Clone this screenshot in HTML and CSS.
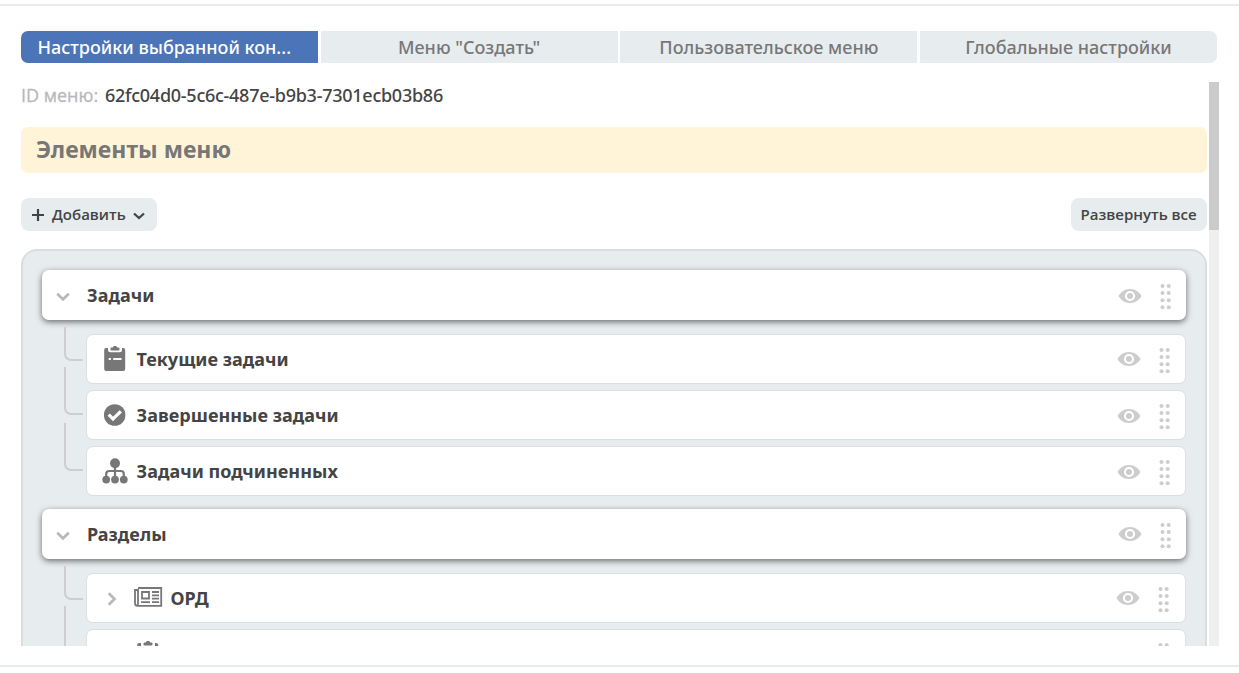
FILE: index.html
```html
<!DOCTYPE html>
<html lang="ru">
<head>
<meta charset="utf-8">
<title>Настройки меню</title>
<link rel="stylesheet" href="styles.css">
</head>
<body>
<svg class="sprite" aria-hidden="true">
  <symbol id="eye" viewBox="0 0 24 16"><path fill-rule="evenodd" d="M12 1C6.500 1 2.200 4.500.500 8c1.700 3.500 6 7 11.500 7s9.800-3.500 11.500-7C21.800 4.500 17.500 1 12 1zm0 1.900a5.100 5.100 0 1 1 0 10.200 5.100 5.100 0 0 1 0-10.200z"/><circle cx="12" cy="8" r="3"/></symbol>
  <symbol id="grip" viewBox="0 0 11 26"><circle cx="2.500" cy="2" r="2"/><circle cx="8.700" cy="2" r="2"/><circle cx="2.500" cy="9" r="2"/><circle cx="8.700" cy="9" r="2"/><circle cx="2.500" cy="16.300" r="2"/><circle cx="8.700" cy="16.300" r="2"/><circle cx="2.500" cy="23.300" r="2"/><circle cx="8.700" cy="23.300" r="2"/></symbol>
  <symbol id="down" viewBox="0 0 14 10"><path class="stroke" d="M1.200 1.800 7 7.300 12.800 1.800"/></symbol>
  <symbol id="clipboard" viewBox="0 0 22 26"><path fill-rule="evenodd" d="M2.300 2H4v1.800a2.500 2.500 0 0 0 2.500 2.500h9A2.500 2.500 0 0 0 18 3.800V2h1.200A2 2 0 0 1 21.200 4v19a2 2 0 0 1-2 2h-17a2 2 0 0 1-2-2V4a2 2 0 0 1 2.100-2zM4.700 12v2h2.200v-2zM9.200 12v2h8.300v-2z"/><path d="M7.500 1.400h1.300C9.200.400 10 0 11 0s1.800.4 2.200 1.400h1.300a1 1 0 0 1 1 1v1a1 1 0 0 1-1 1h-7a1 1 0 0 1-1-1v-1a1 1 0 0 1 1-1z"/></symbol>
  <symbol id="check" viewBox="0 0 22 22"><circle cx="11" cy="11" r="10.800"/><path class="tick" d="m5 10.700 4.300 4.300 7.800-7.700"/></symbol>
  <symbol id="tree" viewBox="0 0 26 26"><circle cx="13" cy="5.300" r="5"/><circle cx="4.200" cy="21.600" r="3.900"/><circle cx="13" cy="21.600" r="3.900"/><circle cx="21.800" cy="21.600" r="3.900"/><path class="branch" d="M13 8v12M4.200 19v-3a3 3 0 0 1 3-3h11.600a3 3 0 0 1 3 3v3"/></symbol>
  <symbol id="news" viewBox="0 0 29 20"><path class="outline" d="M4 1h23.200v17.800H3.200A2.300 2.300 0 0 1 1 16.500V3h3v13.500a2 2 0 0 1-1.200 2M8 5h7v6.500H8zM18 5h7M18 8.300h7M18 11.600h7M7 15.200h9M18 15.200h7"/></symbol>
</svg>

<main class="dialog">
  <nav class="tabs">
    <a class="tab tab-active">Настройки выбранной кон...</a>
    <a class="tab">Меню "Создать"</a>
    <a class="tab">Пользовательское меню</a>
    <a class="tab">Глобальные настройки</a>
  </nav>
  <div class="scroll">
    <div class="content">
      <div class="menu-id"><span class="label">ID меню:</span><span class="value">62fc04d0-5c6c-487e-b9b3-7301ecb03b86</span></div>
      <h2 class="banner">Элементы меню</h2>
      <div class="toolbar">
        <button class="button add"><svg class="plus" viewBox="0 0 12 12"><path class="stroke" d="M6 0v12M0 6h12"/></svg><span>Добавить</span><svg class="caret" viewBox="0 0 12 8"><path class="stroke" d="M1 1.500 6 6 11 1.500"/></svg></button>
        <button class="button expand"><span>Развернуть все</span></button>
      </div>
      <div class="panel">
        <section class="group">
          <div class="row head"><svg class="toggle"><use href="#down"/></svg><span class="title">Задачи</span><svg class="eye"><use href="#eye"/></svg><svg class="grip"><use href="#grip"/></svg></div>
          <div class="children">
            <div class="row item raised"><svg class="icon"><use href="#clipboard" width="22" height="26" x="2"/></svg><span class="title">Текущие задачи</span><svg class="eye"><use href="#eye"/></svg><svg class="grip"><use href="#grip"/></svg></div>
            <div class="row item"><svg class="icon"><use href="#check" width="22" height="22" x="1.700" y="2"/></svg><span class="title">Завершенные задачи</span><svg class="eye"><use href="#eye"/></svg><svg class="grip"><use href="#grip"/></svg></div>
            <div class="row item"><svg class="icon"><use href="#tree" width="26" height="26"/></svg><span class="title">Задачи подчиненных</span><svg class="eye"><use href="#eye"/></svg><svg class="grip"><use href="#grip"/></svg></div>
          </div>
        </section>
        <section class="group">
          <div class="row head raised"><svg class="toggle"><use href="#down"/></svg><span class="title">Разделы</span><svg class="eye"><use href="#eye"/></svg><svg class="grip"><use href="#grip"/></svg></div>
          <div class="children">
            <div class="row item folder raised"><svg class="chevron" viewBox="0 0 10 14"><path class="stroke" d="M1.700 1.200 7.500 7 1.700 12.800"/></svg><svg class="news"><use href="#news"/></svg><span class="title">ОРД</span><svg class="eye"><use href="#eye"/></svg><svg class="grip"><use href="#grip"/></svg></div>
            <div class="row item folder"><svg class="chevron" viewBox="0 0 10 14"><path class="stroke" d="M1.700 1.200 7.500 7 1.700 12.800"/></svg><svg class="icon"><use href="#clipboard" width="22" height="26" x="2"/></svg><span class="title"></span><svg class="eye"><use href="#eye"/></svg><svg class="grip"><use href="#grip"/></svg></div>
          </div>
        </section>
      </div>
    </div>
    <div class="scrollbar"><div class="thumb"></div></div>
  </div>
</main>
</body>
</html>
```
FILE: styles.css
```css
*, *::before { box-sizing: border-box; }
body {
  margin: 0;
  height: 673px;
  padding-top: 4px;
  overflow: hidden;
  background: #fff;
  color: #444;
  font: 500 18px/24px "Noto Sans", "Open Sans", sans-serif;
}
svg { display: block; flex: none; fill: currentColor; }
.sprite { position: absolute; width: 0; height: 0; }
.stroke { fill: none; stroke: currentColor; stroke-width: 2.700; }
.tick { fill: none; stroke: #fff; stroke-width: 3.200; }
.branch { fill: none; stroke: currentColor; stroke-width: 2.200; }
.outline { fill: none; stroke: currentColor; stroke-width: 1.800; }

.dialog {
  height: 663px;
  padding: 25px 20px 0 21px;
  border-top: 2px solid #e7ecef;
  border-bottom: 2px solid #e7ecef;
}
.tabs {
  display: grid;
  grid-template-columns: repeat(4, 297px);
  grid-template-rows: 32px;
  justify-content: space-between;
  width: 1196px;
}
.tab {
  background: #e7ecee;
  color: #777;
  line-height: 33px;
  text-align: center;
  white-space: nowrap;
}
.tab:first-child { border-radius: 7px 0 0 7px; }
.tab:last-child { border-radius: 0 7px 7px 0; }
.tab-active { background: #4b74b9; color: #fff; text-align: left; padding-left: 16.500px; }

.scroll { display: flex; gap: 2px; height: 564px; margin-top: 19px; overflow: hidden; }
.content { width: 1186px; }
.scrollbar { width: 10px; background: #efefef; }
.thumb { height: 148px; background: #cbcbcb; }

.menu-id { display: flex; height: 27px; line-height: 27px; }
.label { width: 84px; color: #b8b8b8; font-family: "Open Sans", sans-serif; -webkit-text-stroke: .3px currentColor; }
.value { letter-spacing: -.26px; }
.banner {
  height: 46px;
  margin: 18px 0 25px;
  padding-left: 15px;
  border-radius: 7px;
  background: #fff4d8;
  color: #777;
  font-size: 23px;
  font-weight: 700;
  line-height: 45px;
}
.toolbar { display: flex; justify-content: space-between; height: 33px; margin-bottom: 18px; }
.button {
  display: flex;
  align-items: center;
  width: 136px;
  padding: 0 9.500px;
  border: 0;
  border-radius: 8px;
  background: #e7ecee;
  color: #444;
  font: 600 15px/33px "Open Sans", "Noto Sans", sans-serif;
  white-space: nowrap;
}
.plus { width: 12px; height: 12px; margin: 0 8px 0 1.500px; }
.plus .stroke { stroke-width: 2.200; }
.caret { width: 12px; height: 8px; margin: 2px 0 0 7.500px; }
.caret .stroke { stroke-width: 2.300; }

.panel {
  height: 600px;
  padding: 19px 19px 0;
  border: 2px solid #d8dde0;
  border-radius: 16px;
  background: #e7ecee;
}
.group { margin-bottom: 13px; }
.row {
  display: flex;
  align-items: flex-start;
  height: 50px;
  border-radius: 7px;
  background: #fff;
  font-weight: 700;
}
.head { width: 1144px; box-shadow: 0 2px 6px rgba(0, 0, 0, .55); }
.toggle { width: 14px; height: 10px; margin: 22px 17px 0 14px; color: #b9b9b9; }
.title { flex: 1; line-height: 50px; white-space: nowrap; letter-spacing: .03px; }
.eye { width: 24px; height: 16px; margin: 18px 18px 0 0; color: #cdcdcd; }
.raised .eye { margin-top: 17px; }
.grip { width: 11px; height: 26px; margin: 14px 15px 0 0; color: #cdcdcd; }
.children { display: grid; gap: 6px; padding: 14px 0 0 44px; }
.item { position: relative; border: 1px solid #dadfe2; }
.item::before {
  content: "";
  position: absolute;
  left: -23px;
  top: -24px;
  width: 19px;
  height: 48px;
  border: 2px solid #cecece;
  border-width: 0 0 2px 2px;
  border-radius: 0 0 0 7px;
}
.item:first-child::before { top: -8px; height: 34px; }
.item .title { line-height: 49px; }
.item .eye { margin-top: 17px; }
.item.raised .eye { margin-top: 16px; }
.item .grip { margin-top: 13px; }
.folder .grip { margin-right: 16.500px; }
.icon { width: 26px; height: 26px; margin: 11px 8.500px 0 15px; color: #777; }
.chevron { width: 10px; height: 14px; margin: 17.500px 17px 0 20px; color: #b9b9b9; }
.news { width: 29px; height: 20px; margin: 12.500px 7.500px 0 0; color: #777; }
.folder .icon { margin-left: 1px; }
```
